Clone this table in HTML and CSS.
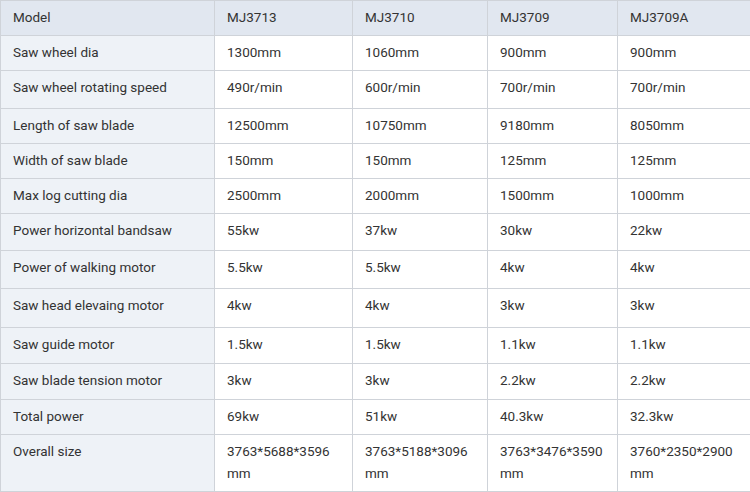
FILE: index.html
```html
<!DOCTYPE html>
<html>
<head>
<meta charset="utf-8">
<link rel="stylesheet" href="styles.css">
</head>
<body>
<table class="spec">
  <colgroup>
    <col class="c1"><col class="c2"><col class="c3"><col class="c4"><col class="c5">
  </colgroup>
  <thead>
    <tr><th>Model</th><th>MJ3713</th><th>MJ3710</th><th>MJ3709</th><th>MJ3709A</th></tr>
  </thead>
  <tbody>
    <tr><td>Saw wheel dia</td><td>1300mm</td><td>1060mm</td><td>900mm</td><td>900mm</td></tr>
    <tr><td>Saw wheel rotating speed</td><td>490r/min</td><td>600r/min</td><td>700r/min</td><td>700r/min</td></tr>
    <tr><td>Length of saw blade</td><td>12500mm</td><td>10750mm</td><td>9180mm</td><td>8050mm</td></tr>
    <tr><td>Width of saw blade</td><td>150mm</td><td>150mm</td><td>125mm</td><td>125mm</td></tr>
    <tr><td>Max log cutting dia</td><td>2500mm</td><td>2000mm</td><td>1500mm</td><td>1000mm</td></tr>
    <tr><td>Power horizontal bandsaw</td><td>55kw</td><td>37kw</td><td>30kw</td><td>22kw</td></tr>
    <tr><td>Power of walking motor</td><td>5.5kw</td><td>5.5kw</td><td>4kw</td><td>4kw</td></tr>
    <tr><td>Saw head elevaing motor</td><td>4kw</td><td>4kw</td><td>3kw</td><td>3kw</td></tr>
    <tr><td>Saw guide motor</td><td>1.5kw</td><td>1.5kw</td><td>1.1kw</td><td>1.1kw</td></tr>
    <tr><td>Saw blade tension motor</td><td>3kw</td><td>3kw</td><td>2.2kw</td><td>2.2kw</td></tr>
    <tr><td>Total power</td><td>69kw</td><td>51kw</td><td>40.3kw</td><td>32.3kw</td></tr>
    <tr><td>Overall size</td><td>3763*5688*3596 mm</td><td>3763*5188*3096 mm</td><td>3763*3476*3590 mm</td><td>3760*2350*2900 mm</td></tr>
  </tbody>
</table>
</body>
</html>
```
FILE: styles.css
```css
html, body {
  margin: 0;
  padding: 0;
  background: #ffffff;
}
body {
  font-family: Roboto, "Liberation Sans", Arial, sans-serif;
  font-size: 13.5px;
  color: #333333;
  overflow: hidden;
}
.spec {
  border-collapse: collapse;
  table-layout: fixed;
  width: 752px;
}
.c1 { width: 214px; }
.c2 { width: 138px; }
.c3 { width: 135px; }
.c4 { width: 130px; }
.c5 { width: 135px; }
.spec th, .spec td {
  border: 1px solid #cfd3d9;
  padding: 5px 12px 0 12px;
  line-height: 22px;
  vertical-align: top;
  text-align: left;
  font-weight: normal;
  box-sizing: border-box;
}
.spec thead th {
  background: #e1e7f0;
}
.spec tbody td:first-child {
  background: #eef2f7;
}
.spec thead tr { height: 35px; }
.spec tbody tr:nth-child(1) { height: 35px; }
.spec tbody tr:nth-child(2) { height: 38px; }
.spec tbody tr:nth-child(3) { height: 35px; }
.spec tbody tr:nth-child(4) { height: 35px; }
.spec tbody tr:nth-child(5) { height: 35px; }
.spec tbody tr:nth-child(6) { height: 37px; }
.spec tbody tr:nth-child(7) { height: 38px; }
.spec tbody tr:nth-child(8) { height: 39px; }
.spec tbody tr:nth-child(9) { height: 36px; }
.spec tbody tr:nth-child(10) { height: 36px; }
.spec tbody tr:nth-child(11) { height: 35px; }
.spec tbody tr:nth-child(12) { height: 57px; }
```
